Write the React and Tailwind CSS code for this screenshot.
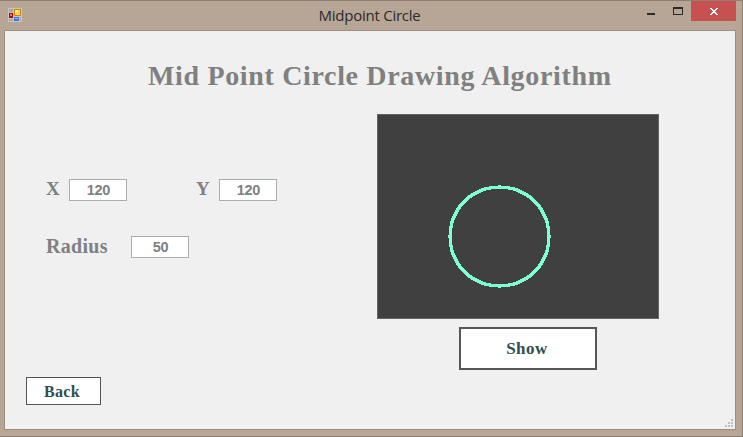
const CENTER = 51;

// Integer-truncated circle points, mirrored over both diagonals.
function circlePoints(r) {
  const seen = new Set();
  for (let x = 0; x <= r; x++) {
    const y = Math.floor(Math.sqrt(r * r - x * x));
    if (x > y + 1) break;
    for (const [a, b] of [[x, y], [y, x]]) {
      for (const sx of [-1, 1]) {
        for (const sy of [-1, 1]) seen.add(`${a * sx},${b * sy}`);
      }
    }
  }
  return [...seen].map((s) => s.split(",").map(Number));
}

const circlePath = circlePoints(50)
  .map(([x, y]) => `M${CENTER + x - 1} ${CENTER + y - 1}h3v3h-3z`)
  .join("");

function Field({ value }) {
  return (
    <div className="flex h-[22px] w-[58px] items-center justify-center border border-[#abadb3] bg-white pl-px font-['Liberation_Sans',sans-serif] text-[14.5px] font-bold leading-none tracking-[-0.3px] text-[#808080]">
      <span>{value}</span>
    </div>
  );
}

function AppIcon() {
  return (
    <svg width="14" height="14" viewBox="0 0 14 14" shapeRendering="crispEdges">
      <rect width="14" height="14" fill="#c4c4c6" />
      <rect x="1" y="1" width="4" height="3" fill="#b7a696" />
      <rect x="1" y="11" width="4" height="2" fill="#b7a696" />
      <rect x="12" y="9" width="1" height="4" fill="#b7a696" />
      <rect x="1" y="5" width="4" height="5" fill="#a80f14" />
      <rect x="2" y="6" width="2" height="2" fill="#e8736f" />
      <rect x="6" y="1" width="7" height="7" fill="#c38a10" />
      <rect x="7" y="2" width="5" height="5" fill="#fbd44e" />
      <rect x="7" y="2" width="3" height="2" fill="#ffe99a" />
      <rect x="6" y="9" width="5" height="4" fill="#3f78dc" />
      <rect x="7" y="10" width="3" height="1" fill="#8db9fa" />
    </svg>
  );
}

export default function App() {
  return (
    <div className="flex h-[437px] w-[743px] flex-col overflow-hidden border-r border-t border-b border-[#8e7f73] bg-[#b7a696]">
      <header className="flex h-[29px] shrink-0 items-start">
        <div className="w-[100px] pl-2 pt-[7px]">
          <AppIcon />
        </div>
        <h1 className="flex-1 pr-[3px] pt-[3px] text-center font-['Open_Sans',sans-serif] text-[15px] font-normal leading-[22px] tracking-[-0.25px] text-[#2a2a2a]">
          Midpoint Circle
        </h1>
        <div className="flex">
          <svg width="46" height="20" shapeRendering="crispEdges">
            <rect x="5" y="12" width="8" height="2" fill="#2a2a2a" />
            <path d="M31 6h10v8h-10zM32 8v5h8v-5z" fill="#2a2a2a" fillRule="evenodd" />
          </svg>
          <div className="h-5 w-[3px]" />
          <div className="flex h-5 w-[45px] justify-center bg-[#c75050]">
            <svg className="mt-[7px]" width="8" height="7" shapeRendering="crispEdges">
              <path
                d="M0 0h2v1h1v1h2v-1h1v-1h2v1h-1v1h-1v1h-1v1h1v1h1v1h1v1h-2v-1h-1v-1h-2v1h-1v1h-2v-1h1v-1h1v-1h1v-1h-1v-1h-1v-1h-1z"
                fill="#fff"
              />
            </svg>
          </div>
          <div className="w-[6px]" />
        </div>
      </header>

      <main className="ml-1 flex h-[400px] w-[732px] flex-col border border-[#9f8f81] bg-[#f0f0f0] font-['Liberation_Serif',serif] font-bold text-[#808080]">
        <h2 className="h-[83px] whitespace-nowrap pl-[143px] pt-[29px] text-[28px] leading-8 tracking-[0.66px]">
          Mid Point Circle Drawing Algorithm
        </h2>
        <div className="flex h-[263px]">
          <section className="w-[372px] pl-[41px] pt-[65px] text-[20px] leading-[20px]">
            <div className="flex">
              <span className="w-[23px] text-[19px]">X</span>
              <Field value="120" />
              <span className="ml-[69px] w-[23px] text-[19px]">Y</span>
              <Field value="120" />
            </div>
            <div className="mt-[35px] flex">
              <span className="w-[85px] tracking-[0.3px]">Radius</span>
              <Field value="50" />
            </div>
          </section>
          <section className="w-[282px]">
            <div className="h-[205px] border border-[#646464] bg-[#404040] pl-[70px] pt-[70px]">
              <svg width="103" height="103" shapeRendering="crispEdges">
                <path d={circlePath} fill="#7fffd4" />
              </svg>
            </div>
            <button className="ml-[82px] mt-2 flex h-[43px] w-[138px] items-center justify-center border-2 border-[#555657] bg-white pr-[2px] text-[17px] leading-none tracking-[0.5px] text-[#2f4f4f]">
              Show
            </button>
          </section>
        </div>
        <footer className="flex flex-1 justify-between pl-[21px] pr-[2px]">
          <button className="flex h-[28px] w-[75px] items-center justify-center border border-[#555657] bg-white pr-[3px] pt-[2px] text-[16px] leading-none tracking-[0.3px] text-[#2f4f4f]">
            Back
          </button>
          <svg className="mb-[2px] self-end" width="8" height="8" fill="#bfbfbf" shapeRendering="crispEdges">
            <path d="M6 0h2v2h-2zM3 3h2v2h-2zM6 3h2v2h-2zM0 6h2v2h-2zM3 6h2v2h-2zM6 6h2v2h-2z" />
          </svg>
        </footer>
      </main>
    </div>
  );
}
